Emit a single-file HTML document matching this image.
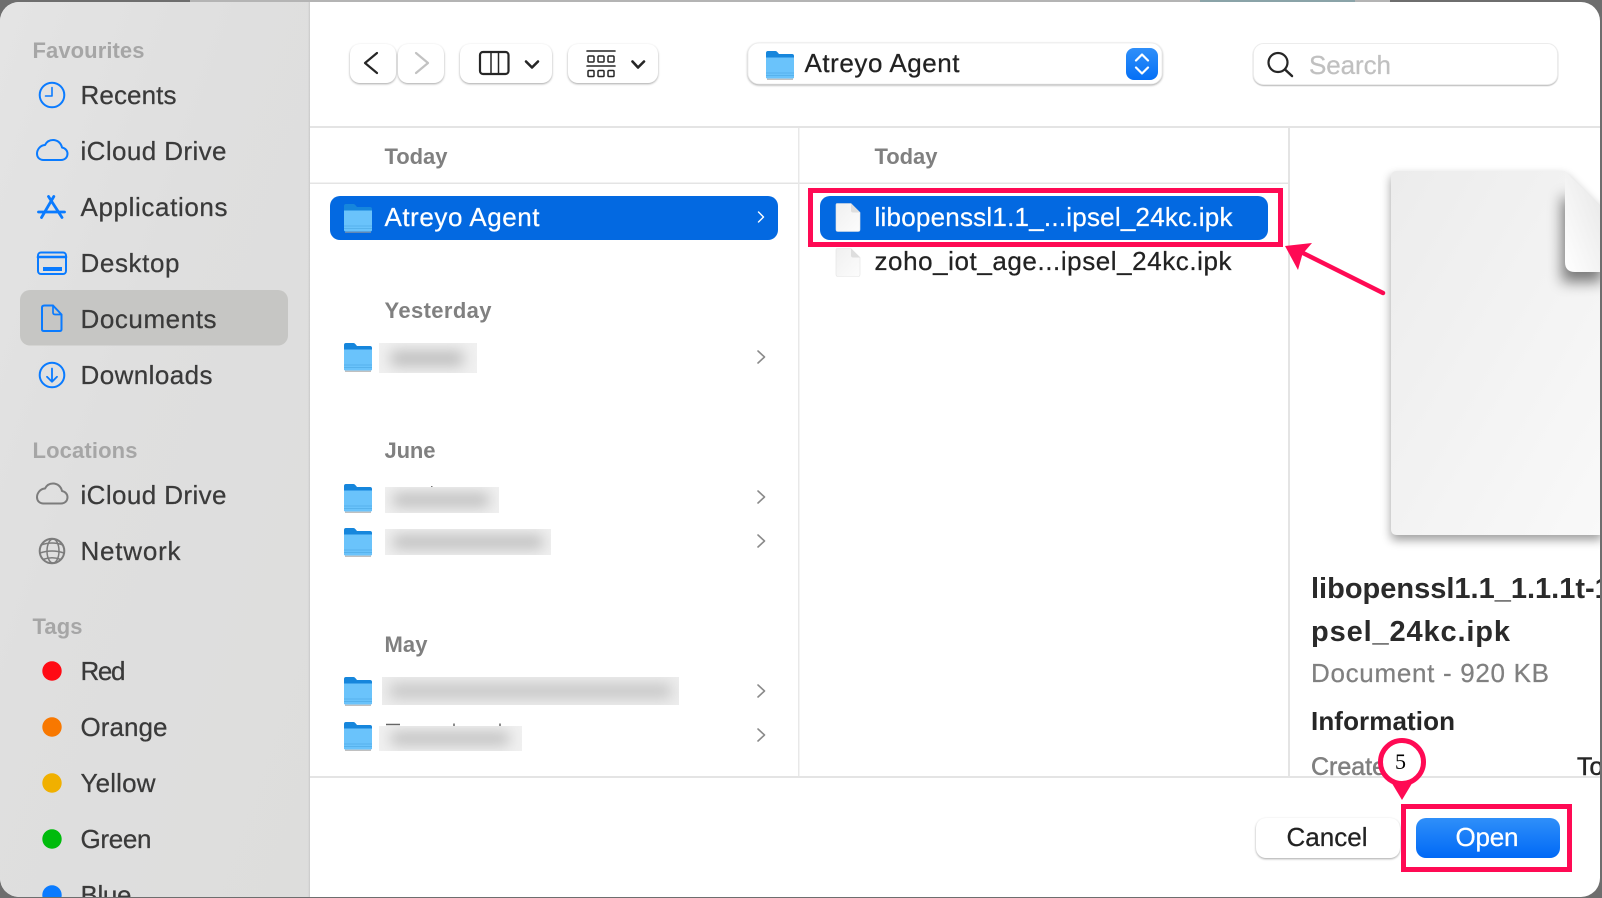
<!DOCTYPE html>
<html lang="en"><head><meta charset="utf-8"><title>Open</title>
<style>
html,body{margin:0;padding:0;background:#6e6e6e;width:1602px;height:898px;overflow:hidden}
svg{display:block}
text{font-family:"Liberation Sans",sans-serif}
.s{font-size:26px;fill:#3a3a3a;stroke:#3a3a3a;stroke-width:.25px}
.h{font-size:22px;font-weight:bold;fill:#a6a6a6}
.c{font-size:22px;font-weight:bold;fill:#808080}
.d{font-size:26px;fill:#222;stroke:#222;stroke-width:.25px}
.w{font-size:26px;fill:#fff;stroke:#fff;stroke-width:.25px}
.b{fill:none;stroke:#0a7bff;stroke-width:2;stroke-linecap:round;stroke-linejoin:round}
.g{fill:none;stroke:#7c7c7c;stroke-width:2;stroke-linecap:round;stroke-linejoin:round}
.k{fill:none;stroke:#262626;stroke-width:2.2;stroke-linecap:round;stroke-linejoin:round}
.btn{fill:#fff;filter:drop-shadow(0 1px 1px rgba(0,0,0,.35))}
.chev{fill:none;stroke:#8a8a8a;stroke-width:1.6;stroke-linecap:round;stroke-linejoin:round}
</style></head><body>
<svg width="1602" height="898" viewBox="0 0 1602 898" xmlns="http://www.w3.org/2000/svg">
<defs>
<clipPath id="win"><rect x="0" y="2" width="1600" height="895" rx="19"/></clipPath>
<clipPath id="info"><rect x="1291" y="540" width="309" height="236"/></clipPath>
<clipPath id="docclip"><path d="M1397 171H1565L1602 208V535H1397Q1391 535 1391 529V177Q1391 171 1397 171Z"/></clipPath>
<linearGradient id="side" x1="0" y1="0" x2="1" y2="1"><stop offset="0" stop-color="#e4e4e4"/><stop offset=".4" stop-color="#dfdfdf"/><stop offset="1" stop-color="#dddddc"/></linearGradient>
<linearGradient id="edge" x1="0" y1="0" x2="1" y2="0"><stop offset="0" stop-color="#dedede" stop-opacity="0"/><stop offset="1" stop-color="#c8c8c8"/></linearGradient>
<linearGradient id="open" x1="0" y1="0" x2="0" y2="1"><stop offset="0" stop-color="#2f8ff9"/><stop offset="1" stop-color="#0069f6"/></linearGradient>
<linearGradient id="step" x1="0" y1="0" x2="0" y2="1"><stop offset="0" stop-color="#2f8ff9"/><stop offset="1" stop-color="#0570f6"/></linearGradient>
<linearGradient id="doc" x1="0" y1="0" x2="1" y2="1"><stop offset="0" stop-color="#ececec"/><stop offset="1" stop-color="#f9f9f9"/></linearGradient>
<linearGradient id="fold" x1="0" y1="1" x2="1" y2="0"><stop offset="0" stop-color="#fff"/><stop offset="1" stop-color="#e6e6e6"/></linearGradient>
<linearGradient id="file" x1="0" y1="0" x2="1" y2="1"><stop offset="0" stop-color="#f0f0f0"/><stop offset="1" stop-color="#fcfcfc"/></linearGradient>
<filter id="bl" x="-40%" y="-400%" width="180%" height="900%"><feGaussianBlur stdDeviation="7"/></filter>
<filter id="ds" x="-20%" y="-20%" width="140%" height="140%"><feGaussianBlur stdDeviation="5"/></filter>
<filter id="fs" x="-100%" y="-50%" width="300%" height="200%"><feGaussianBlur stdDeviation="7"/></filter>
<symbol id="folder" viewBox="0 0 28 29" width="28" height="29">
<path d="M2 0H9.500Q10.500 0 11.300 1L13 3H26Q28 3 28 5V26Q28 27.500 26 27.500H2Q0 27.500 0 26V2Q0 0 2 0Z" fill="#1686dc"/>
<path d="M0 6.500H28V26Q28 27.500 26 27.500H2Q0 27.500 0 26Z" fill="#6ac3fb"/>
<path d="M0 22H28M0 24.500H28" stroke="#52ade8" stroke-width=".8"/>
<path d="M1 28.200H27" stroke="#9a9a9a" stroke-width=".9"/>
</symbol>
<symbol id="filei" viewBox="0 0 26 29" width="26" height="29">
<path d="M2 .5H16L25 9.500V26.500Q25 28.500 23 28.500H3Q1 28.500 1 26.500V2Q1 .5 2 .5Z" fill="url(#file)" stroke="#e3e3e3" stroke-width=".6"/>
<path d="M16 .5L25 9.500H18Q16 9.500 16 7.500Z" fill="#dedede"/>
</symbol>
</defs>

<rect width="1602" height="898" fill="#6e6e6e"/>
<rect x="190" y="0" width="1010" height="2" fill="#b4b4b4"/>
<rect x="1200" y="0" width="155" height="2" fill="#8aa3a8"/>
<rect x="1355" y="0" width="35" height="2" fill="#b4b4b4"/>

<g clip-path="url(#win)">
<rect x="0" y="0" width="1602" height="898" fill="#fff"/>
<rect x="0" y="0" width="310" height="898" fill="url(#side)"/>
<rect x="307" y="0" width="3" height="898" fill="url(#edge)"/>

<text x="32.500" y="58" class="h" textLength="112">Favourites</text>
<text x="32.500" y="458" class="h" textLength="105">Locations</text>
<text x="32.500" y="634" class="h" textLength="50">Tags</text>

<rect x="20" y="290" width="268" height="55.500" rx="10" fill="#c6c6c4"/>

<text x="80.500" y="104" class="s" textLength="96">Recents</text>
<text x="80.500" y="160" class="s" textLength="146">iCloud Drive</text>
<text x="80.500" y="216" class="s" textLength="147">Applications</text>
<text x="80.500" y="272" class="s" textLength="99">Desktop</text>
<text x="80.500" y="328" class="s" textLength="136">Documents</text>
<text x="80.500" y="384" class="s" textLength="132">Downloads</text>
<text x="80.500" y="504" class="s" textLength="146">iCloud Drive</text>
<text x="80.500" y="560" class="s" textLength="100">Network</text>
<text x="80.500" y="680" class="s" textLength="45">Red</text>
<text x="80.500" y="736" class="s" textLength="87">Orange</text>
<text x="80.500" y="792" class="s" textLength="75">Yellow</text>
<text x="80.500" y="848" class="s" textLength="71">Green</text>
<text x="80.500" y="904" class="s" textLength="51">Blue</text>

<!-- sidebar icons -->
<circle cx="52" cy="95" r="12.300" class="b"/>
<path d="M52 87.500V96H45.500" class="b" style="stroke-width:1.600"/>
<path d="M43.500 160H61C65 160 67.500 157.300 67.500 153.800C67.500 150.500 65 148 62 147.500C61 143 57.500 140 53 140C49.300 140 46.500 142 45 145C40.300 145.300 37 149.500 37 153.800C37 157.300 39.500 160 43.500 160Z" class="b"/>
<path d="M48.500 196.500L62 217.500M53.800 196.500L41.500 217.500M38.500 212H64.500" class="b" style="stroke-width:2.800"/>
<rect x="38" y="252.500" width="28" height="21.500" rx="3" class="b"/>
<path d="M38 257H66" class="b" style="stroke-width:2.600"/>
<rect x="43" y="267" width="19" height="4" fill="#0a7bff"/>
<path d="M44.500 305.500H53L61.500 314.500V329.500Q61.500 331 59.500 331H44Q42 331 42 329.500V307.500Q42 305.500 44.500 305.500Z" class="b"/>
<path d="M53 305.500V312.500Q53 314.500 55 314.500H61.500" class="b" style="stroke-width:1.700"/>
<circle cx="52" cy="375" r="12.300" class="b"/>
<path d="M52 368.500V381.500M47 376.800L52 381.800L57 376.800" class="b" style="stroke-width:1.800"/>
<path d="M43.500 503.500H61C65 503.500 67.500 500.800 67.500 497.300C67.500 494 65 491.500 62 491C61 486.500 57.500 483.500 53 483.500C49.300 483.500 46.500 485.500 45 488.500C40.300 488.800 37 493 37 497.300C37 500.800 39.500 503.500 43.500 503.500Z" class="g"/>
<g class="g" style="stroke-width:1.500">
<circle cx="52" cy="551" r="12.300" style="stroke-width:2"/>
<ellipse cx="53" cy="551" rx="6" ry="12"/>
<path d="M41 545Q52 541 63 545M40 553Q52 549 64 553M43 559.500Q52 556 61 559.500"/>
</g>
<circle cx="52" cy="671" r="9.700" fill="#ff0a14"/>
<circle cx="52" cy="727" r="9.700" fill="#f87800"/>
<circle cx="52" cy="783" r="9.700" fill="#f0b000"/>
<circle cx="52" cy="839" r="9.700" fill="#00bb0c"/>
<circle cx="52" cy="895" r="9.700" fill="#0a7bff"/>

<!-- toolbar -->
<rect x="350" y="44" width="46" height="39" rx="10" class="btn"/>
<rect x="398" y="44" width="46" height="39" rx="10" class="btn"/>
<rect x="460" y="44" width="92" height="39" rx="10" class="btn"/>
<rect x="568" y="44" width="90" height="39" rx="10" class="btn"/>
<path d="M377 53L365 63L377 73" class="k"/>
<path d="M416 53L428 63L416 73" class="k" style="stroke:#c2c2c2"/>
<rect x="480" y="52" width="28.500" height="22" rx="3" class="k"/>
<path d="M491 52V74M498.500 52V74" class="k" style="stroke-width:1.500"/>
<path d="M526 61.500L532 67.500L538 61.500" class="k" style="stroke-width:2.600"/>
<path d="M587 51H615M587 66H615" class="k" style="stroke-width:1.600"/>
<g fill="none" stroke="#262626" stroke-width="1.500">
<rect x="588" y="56" width="6" height="6" rx="1"/><rect x="598" y="56" width="6" height="6" rx="1"/><rect x="608" y="56" width="6" height="6" rx="1"/>
<rect x="588" y="70.500" width="6" height="6" rx="1"/><rect x="598" y="70.500" width="6" height="6" rx="1"/><rect x="608" y="70.500" width="6" height="6" rx="1"/>
</g>
<path d="M632.500 61.500L638 67.500L644 61.500" class="k" style="stroke-width:2.600"/>

<rect x="748" y="43" width="414" height="41" rx="11" fill="#fff" style="filter:drop-shadow(0 1px 1px rgba(0,0,0,.35))" stroke="#ececec" stroke-width=".8"/>
<use href="#folder" x="766" y="51"/>
<text x="804.500" y="72" class="d" textLength="155">Atreyo Agent</text>
<rect x="1126" y="48" width="32" height="32" rx="8" fill="url(#step)"/>
<path d="M1136 60.500L1142 54.500L1148 60.500M1136 67.500L1142 73.500L1148 67.500" fill="none" stroke="#fff" stroke-width="2.200" stroke-linecap="round" stroke-linejoin="round"/>

<rect x="1253.500" y="43.500" width="304" height="41" rx="10" fill="#fff" stroke="#ececec" style="filter:drop-shadow(0 1px .5px rgba(0,0,0,.28))"/>
<circle cx="1278" cy="62.500" r="9.500" class="k"/>
<path d="M1285 69.500L1292 76" class="k" style="stroke-width:2.500"/>
<text x="1309" y="74" font-size="26" fill="#c0c0c0" stroke="#c0c0c0" stroke-width=".25" textLength="82">Search</text>

<!-- dividers -->
<rect x="310" y="126" width="1290" height="2" fill="#e4e4e4"/>
<rect x="310" y="182.500" width="979" height="1.500" fill="#e4e4e4"/>
<rect x="798" y="128" width="1.500" height="649" fill="#e8e8e8"/>
<rect x="1288" y="128" width="2" height="649" fill="#e4e4e4"/>

<!-- column 1 -->
<text x="384.500" y="164" class="c" textLength="63">Today</text>
<text x="874.500" y="164" class="c" textLength="63">Today</text>
<rect x="330" y="196" width="448" height="44" rx="10" fill="#0369e1"/>
<use href="#folder" x="344" y="204"/>
<text x="384.500" y="226" class="w" textLength="155">Atreyo Agent</text>
<path d="M758.500 212L763.500 217L758.500 222" class="chev" style="stroke:#fff;stroke-width:1.400"/>

<text x="384.500" y="318" class="c" textLength="107">Yesterday</text>
<use href="#folder" x="344" y="343"/>
<svg x="379" y="343" width="98" height="30"><rect width="98" height="30" fill="#f0f0f0"/><rect x="12" y="8" width="72" height="15" fill="#bcbcbc" filter="url(#bl)"/></svg>
<path d="M758 351L764.500 357L758 363" class="chev"/>

<text x="384.500" y="458" class="c" textLength="51">June</text>
<use href="#folder" x="344" y="484"/>
<rect x="431" y="486" width="1.500" height="2" fill="#777"/>
<svg x="385" y="487" width="114" height="26"><rect width="114" height="26" fill="#f0f0f0"/><rect x="8" y="6" width="96" height="14" fill="#bebebe" filter="url(#bl)"/></svg>
<path d="M758 491L764.500 497L758 503" class="chev"/>
<use href="#folder" x="344" y="528"/>
<svg x="385" y="529" width="166" height="26"><rect width="166" height="26" fill="#f0f0f0"/><rect x="8" y="6" width="150" height="14" fill="#bebebe" filter="url(#bl)"/></svg>
<path d="M758 535L764.500 541L758 547" class="chev"/>

<text x="384.500" y="652" class="c" textLength="43">May</text>
<use href="#folder" x="344" y="677"/>
<svg x="382" y="677" width="297" height="28"><rect width="297" height="28" fill="#ededed"/><rect x="8" y="7" width="281" height="14" fill="#c4c4c4" filter="url(#bl)"/></svg>
<path d="M758 685L764.500 691L758 697" class="chev"/>
<use href="#folder" x="344" y="722"/>
<path d="M386 724.500H400M454 723.500V726M500 723.500V726" stroke="#666" stroke-width="1.500"/>
<svg x="379" y="726" width="143" height="25"><rect width="143" height="25" fill="#f0f0f0"/><rect x="12" y="6" width="118" height="13" fill="#bebebe" filter="url(#bl)"/></svg>
<path d="M758 729L764.500 735L758 741" class="chev"/>

<!-- column 2 -->
<rect x="820" y="196" width="448" height="44" rx="10" fill="#0369e1"/>
<use href="#filei" x="835" y="203"/>
<text x="874.500" y="226" class="w" textLength="358">libopenssl1.1_...ipsel_24kc.ipk</text>
<use href="#filei" x="835" y="248"/>
<text x="874.500" y="270" class="d" textLength="357">zoho_iot_age...ipsel_24kc.ipk</text>

<rect x="810.500" y="190.500" width="470" height="54" fill="none" stroke="#ff0a54" stroke-width="5"/>
<path d="M1383 293L1303 253" stroke="#ff0a54" stroke-width="4.500" stroke-linecap="round"/>
<path d="M1285 246L1312 243L1302.500 254L1298 270Z" fill="#ff0a54"/>

<!-- preview -->
<path d="M1395 171H1565L1602 208V535H1395Q1391 535 1391 530V175Q1391 171 1395 171Z" fill="#000" opacity=".38" filter="url(#ds)" transform="translate(0 5)"/>
<path d="M1397 171H1565L1602 208V535H1397Q1391 535 1391 529V177Q1391 171 1397 171Z" fill="url(#doc)"/>
<g clip-path="url(#docclip)">
<path d="M1562 195L1602 215V282H1562Z" fill="#000" opacity=".5" filter="url(#fs)"/>
</g>
<path d="M1565 172L1602 208V272H1575Q1565 272 1565 262Z" fill="url(#fold)"/>

<g clip-path="url(#info)">
<text x="1311" y="598" font-size="29" font-weight="bold" fill="#2a2a2a">libopenssl1.1_1.1.1t-1</text>
<text x="1311" y="641" font-size="29" font-weight="bold" fill="#2a2a2a" textLength="199">psel_24kc.ipk</text>
<text x="1311" y="682" font-size="26" fill="#808080" stroke="#808080" stroke-width=".25" textLength="238">Document - 920 KB</text>
<text x="1311" y="730" font-size="26" font-weight="bold" fill="#262626" textLength="144">Information</text>
<text x="1311" y="775" font-size="25" fill="#808080" stroke="#808080" stroke-width=".5">Created</text>
<text x="1577" y="775" font-size="25" fill="#262626" stroke="#262626" stroke-width=".5">To</text>
</g>
<rect x="310" y="776" width="1290" height="2" fill="#e4e4e4"/>

<!-- bottom buttons -->
<rect x="1256" y="818" width="144" height="40" rx="10" class="btn"/>
<text x="1286.500" y="846" class="d" textLength="81">Cancel</text>
<rect x="1416" y="818" width="144" height="40" rx="10" fill="url(#open)"/>
<text x="1455.500" y="846" class="w" textLength="63">Open</text>
<rect x="1403.500" y="806.500" width="166" height="63" fill="none" stroke="#ff0a54" stroke-width="5"/>

<!-- pin -->
<path d="M1390 780L1402 800L1414 780Z" fill="#ff0a54"/>
<circle cx="1402" cy="762" r="21.500" fill="#fff" stroke="#ff0a54" stroke-width="5"/>
<text x="1400.500" y="769" text-anchor="middle" font-size="22" fill="#000" style="font-family:'Liberation Serif',serif">5</text>
</g>
</svg>
</body></html>
